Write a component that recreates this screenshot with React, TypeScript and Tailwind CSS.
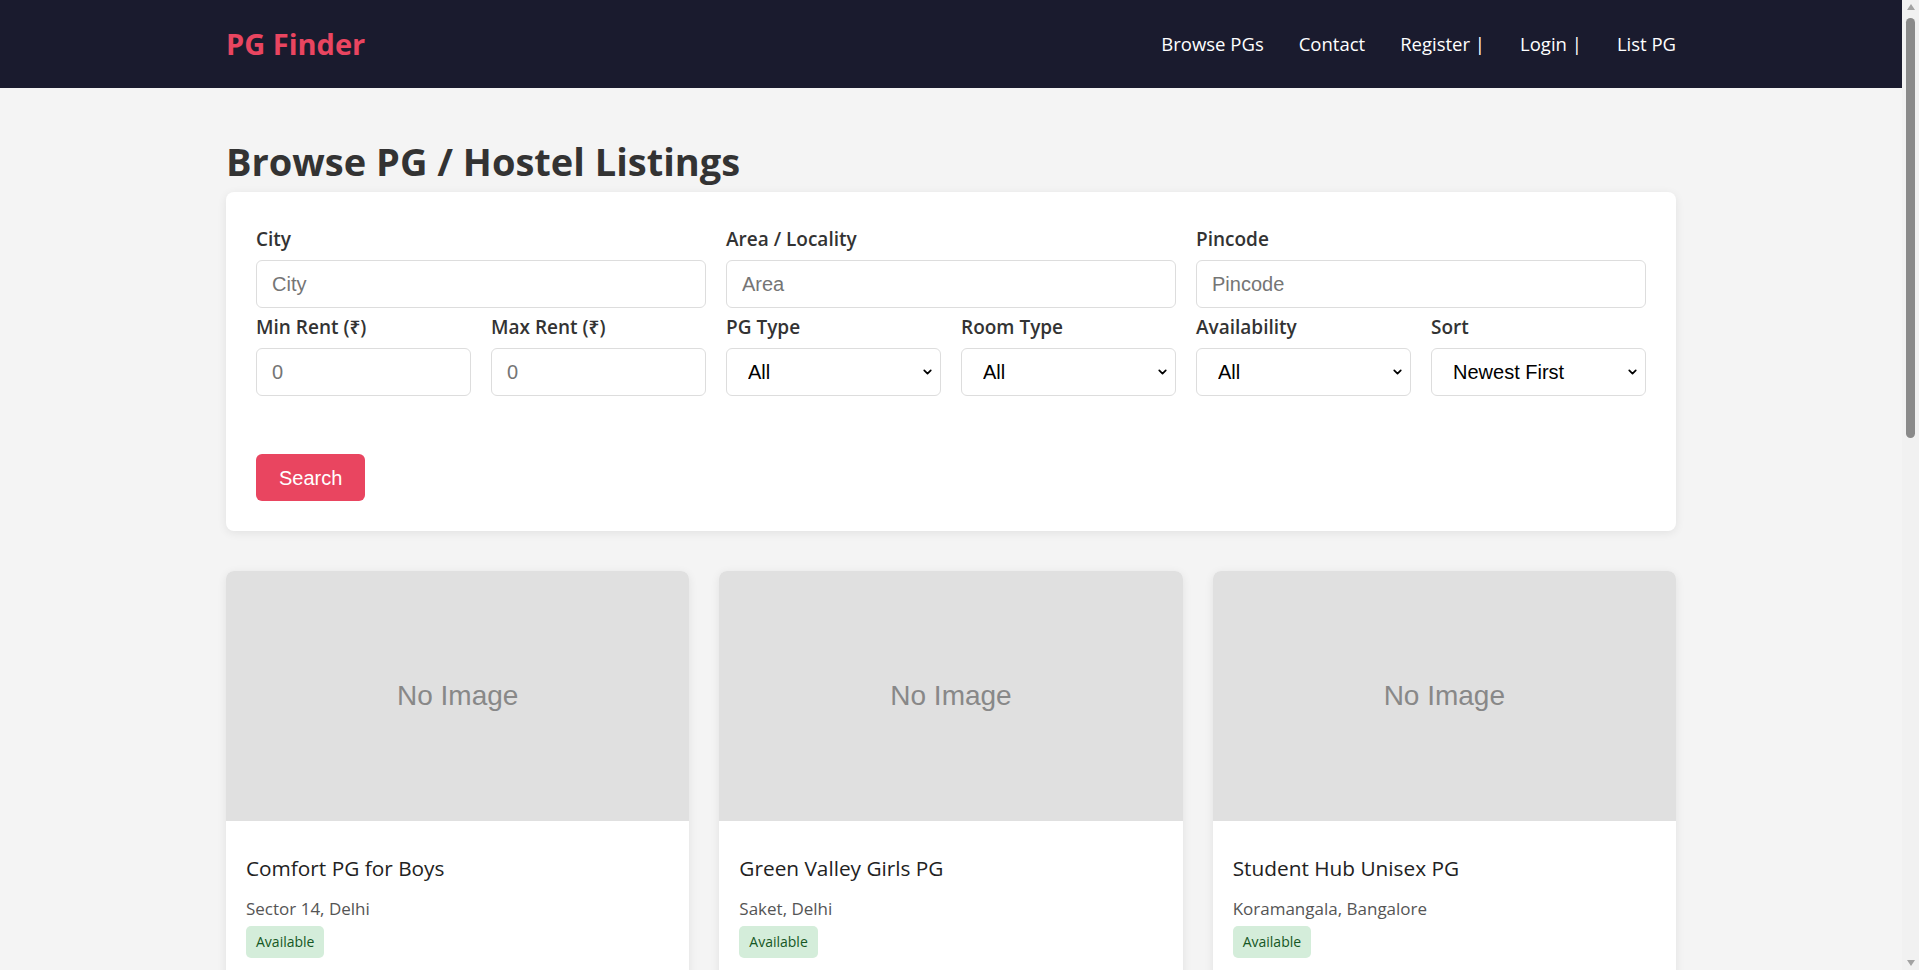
import { ChevronDown } from "lucide-react";

const listings = [
  { name: "Comfort PG for Boys", place: "Sector 14, Delhi" },
  { name: "Green Valley Girls PG", place: "Saket, Delhi" },
  { name: "Student Hub Unisex PG", place: "Koramangala, Bangalore" },
];

function Label({ children }: { children: React.ReactNode }) {
  return (
    <label className="mb-[8px] block text-[19px] font-semibold leading-[26px] text-[#333]">
      {children}
    </label>
  );
}

function TextField({ label, placeholder, span }: { label: string; placeholder: string; span?: boolean }) {
  return (
    <div className={span ? "col-span-2" : ""}>
      <Label>{label}</Label>
      <input
        type="text"
        placeholder={placeholder}
        className="h-[48px] w-full rounded-[6px] border border-[#ddd] bg-white px-[15px] font-['Liberation_Sans',Arial,sans-serif] text-[20px] text-black outline-none placeholder:text-[#757575]"
      />
    </div>
  );
}

function SelectField({ label, value }: { label: string; value: string }) {
  return (
    <div>
      <Label>{label}</Label>
      <div className="relative">
        <select
          defaultValue={value}
          className="h-[48px] w-full appearance-none rounded-[6px] border border-[#ddd] bg-white pl-[21px] pr-[30px] font-['Liberation_Sans',Arial,sans-serif] text-[20px] text-black outline-none"
        >
          <option>{value}</option>
        </select>
        <ChevronDown
          className="pointer-events-none absolute right-[7px] top-1/2 h-[13px] w-[13px] -translate-y-1/2 text-black"
          strokeWidth={3.2}
        />
      </div>
    </div>
  );
}

export default function App() {
  return (
    <div className="min-h-screen bg-[#f4f4f4] pr-[17px] font-['Open_Sans','Noto_Sans',sans-serif]">
      {/* scrollbar gutter, as in the browser capture */}
      <div className="fixed right-0 top-0 flex h-screen w-[17px] flex-col items-center bg-[#f1f1f1]">
        <div className="mt-[4px] h-0 w-0 border-x-[4px] border-b-[6px] border-x-transparent border-b-[#a3a3a3]" />
        <div className="mt-[8px] h-[420px] w-[9px] rounded-full bg-[#8a8a8a]" />
        <div className="flex-1" />
        <div className="mb-[4px] h-0 w-0 border-x-[4px] border-t-[6px] border-x-transparent border-t-[#a3a3a3]" />
      </div>

      <header className="h-[88px] bg-[#1a1b2e]">
        <div className="mx-auto flex h-full max-w-[1450px] items-center justify-between">
          <a href="#" className="text-[29px] font-bold text-[#e94560]">
            PG Finder
          </a>
          <nav className="flex items-center gap-[35px] text-[18.5px] text-white">
            <a href="#">Browse PGs</a>
            <a href="#">Contact</a>
            <a href="#">Register |</a>
            <a href="#">Login |</a>
            <a href="#">List PG</a>
          </nav>
        </div>
      </header>

      <main className="mx-auto max-w-[1450px] pt-[51px]">
        <h1 className="mb-[9px] text-[38px] font-bold leading-[44px] text-[#333]">
          Browse PG / Hostel Listings
        </h1>

        <form
          onSubmit={(e) => e.preventDefault()}
          className="rounded-[8px] bg-white px-[30px] pb-[30px] pt-[34px] shadow-[0_2px_10px_rgba(0,0,0,0.08)]"
        >
          <div className="grid grid-cols-6 gap-x-[20px] gap-y-[6px]">
            <TextField label="City" placeholder="City" span />
            <TextField label="Area / Locality" placeholder="Area" span />
            <TextField label="Pincode" placeholder="Pincode" span />
            <TextField label="Min Rent (₹)" placeholder="0" />
            <TextField label="Max Rent (₹)" placeholder="0" />
            <SelectField label="PG Type" value="All" />
            <SelectField label="Room Type" value="All" />
            <SelectField label="Availability" value="All" />
            <SelectField label="Sort" value="Newest First" />
          </div>
          <button
            type="submit"
            className="mt-[58px] h-[47px] rounded-[6px] bg-[#e94560] px-[23px] font-['Liberation_Sans',Arial,sans-serif] text-[20px] text-white"
          >
            Search
          </button>
        </form>

        <div className="mt-[40px] grid grid-cols-3 gap-[30px] pb-[40px]">
          {listings.map((l) => (
            <div key={l.name} className="overflow-hidden rounded-[8px] bg-white shadow-[0_2px_10px_rgba(0,0,0,0.08)]">
              <div className="flex h-[250px] items-center justify-center bg-[#e0e0e0] font-['Liberation_Sans',Arial,sans-serif] text-[28px] text-[#888]">
                No Image
              </div>
              <div className="px-[20px] pb-[20px] pt-[34px]">
                <h3 className="text-[20.8px] leading-[27px] text-[#222]">{l.name}</h3>
                <p className="mt-[15px] text-[17px] leading-[23px] text-[#555]">{l.place}</p>
                <span className="mt-[6px] inline-block rounded-[5px] bg-[#d4edda] px-[10px] py-[6px] text-[14px] leading-[20px] text-[#155724]">
                  Available
                </span>
                <div className="h-[60px]" />
              </div>
            </div>
          ))}
        </div>
      </main>
    </div>
  );
}
